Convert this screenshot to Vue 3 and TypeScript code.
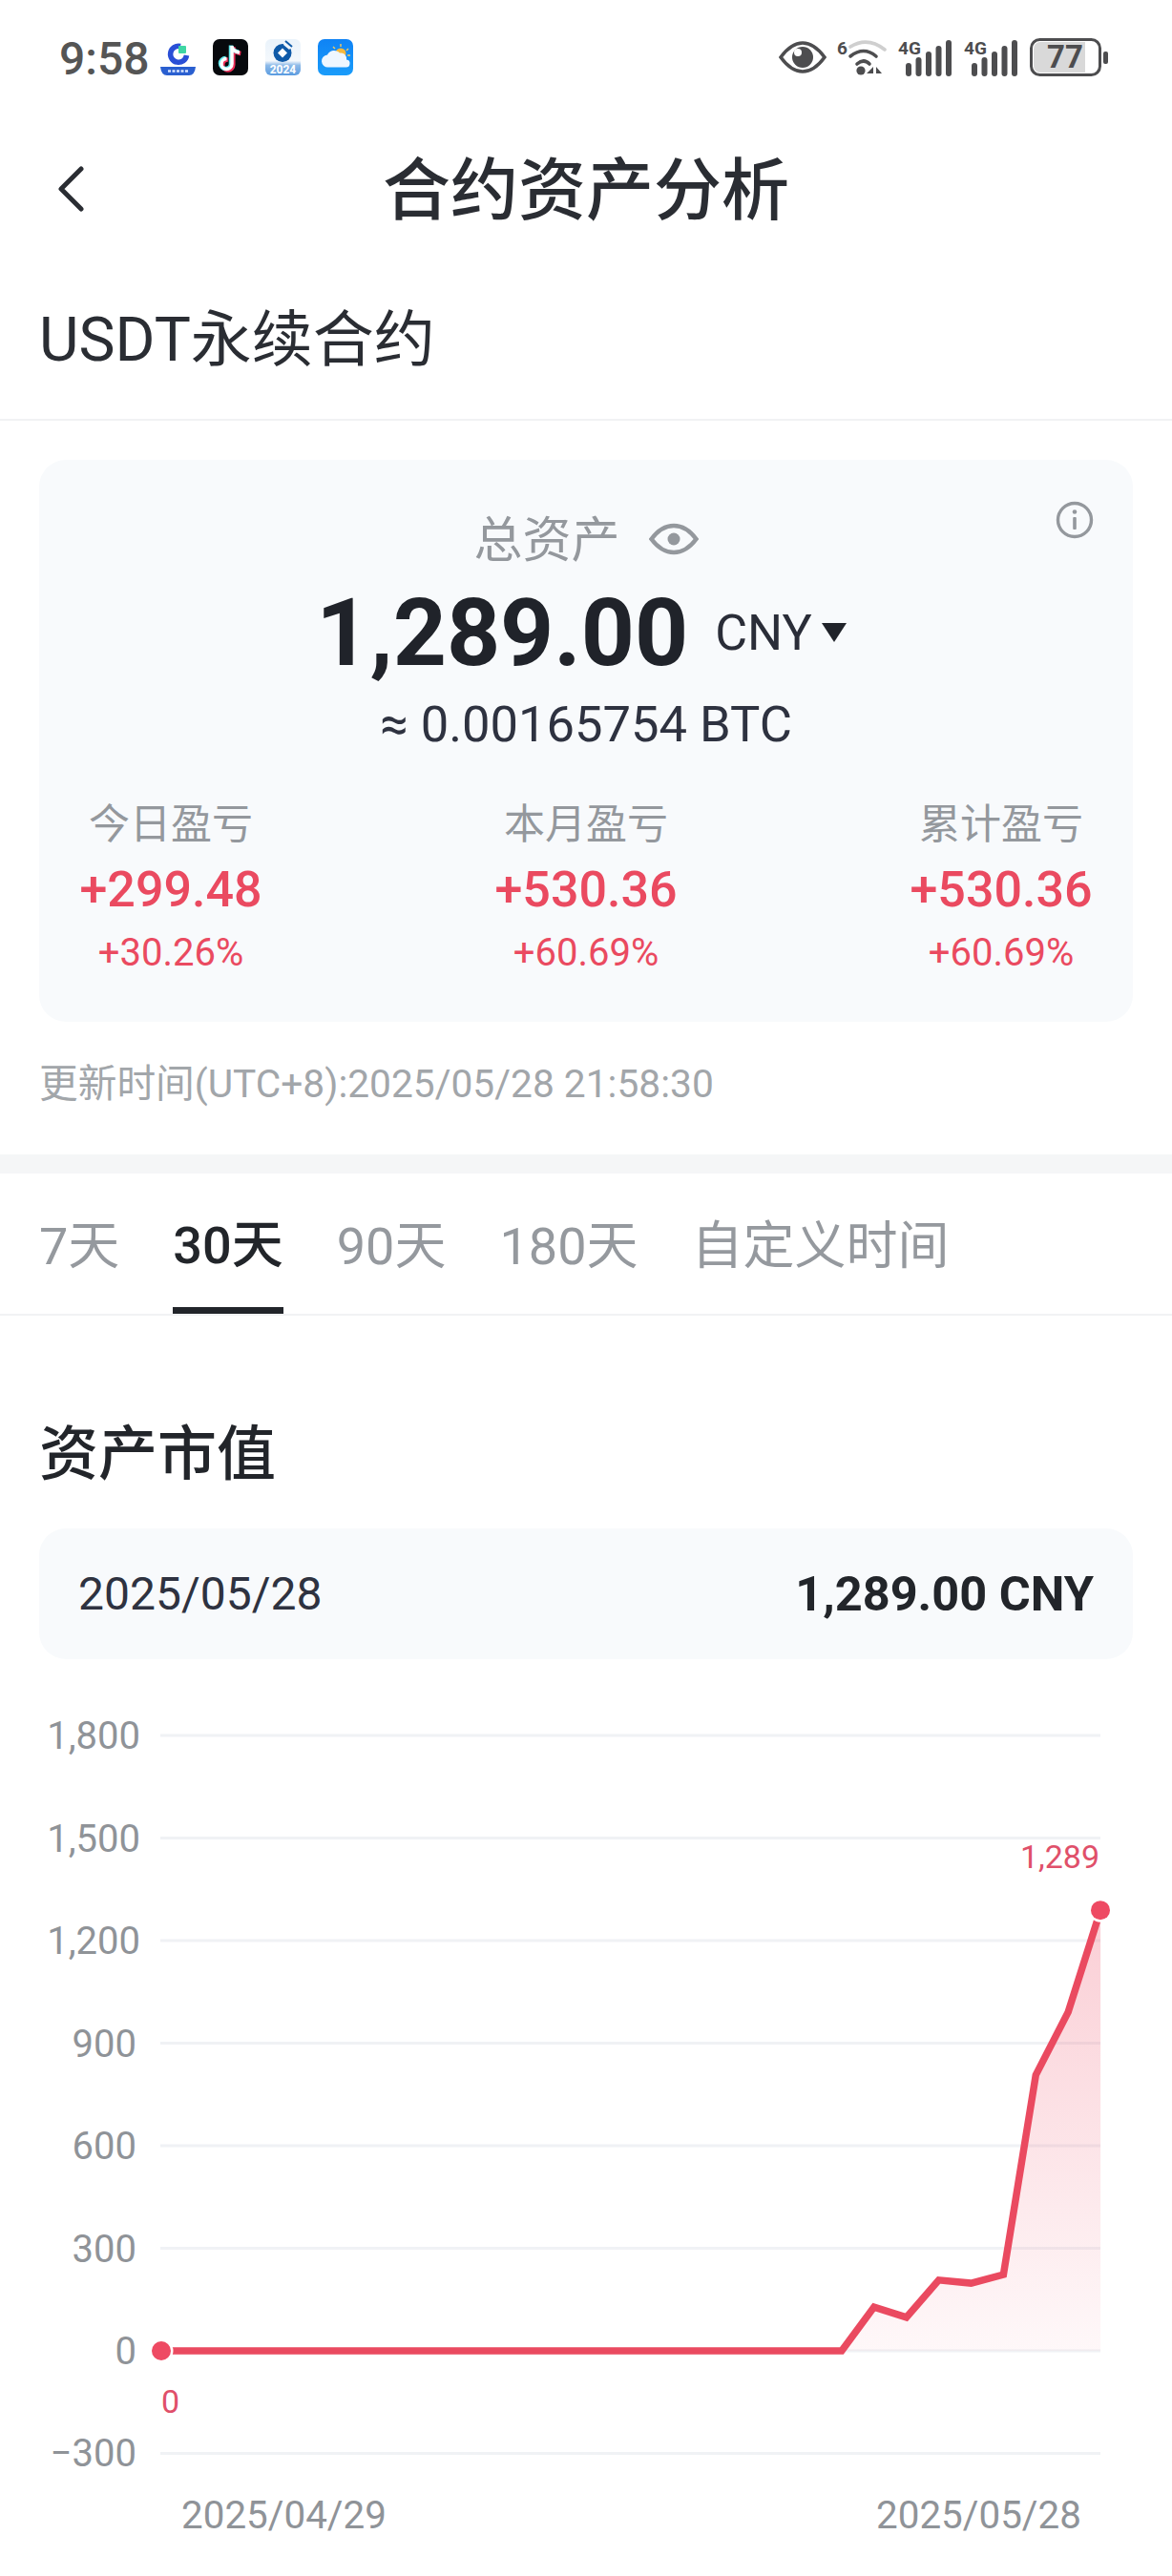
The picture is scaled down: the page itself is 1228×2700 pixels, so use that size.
<script setup lang="ts">
import { computed } from 'vue';

interface Stat {
  label: string;
  value: string;
  pct: string;
}

const stats: Stat[] = [
  { label: '今日盈亏', value: '+299.48', pct: '+30.26%' },
  { label: '本月盈亏', value: '+530.36', pct: '+60.69%' },
  { label: '累计盈亏', value: '+530.36', pct: '+60.69%' }
];

const tabs = ['7天', '30天', '90天', '180天', '自定义时间'];
const activeTab = '30天';

const ticks = [1800, 1500, 1200, 900, 600, 300, 0, -300];
const values = [
  ...Array.from({ length: 22 }, () => 0),
  128, 98, 207, 198, 223, 807, 991, 1289
];

const X0 = 170;
const XSTEP = 33.9;
const chartX = (i: number) => X0 + i * XSTEP;
const chartY = (v: number) => 704 - v * 0.3583;

const linePoints = computed(() =>
  values.map((v, i) => `${chartX(i).toFixed(1)},${chartY(v).toFixed(1)}`).join(' ')
);
const areaPoints = computed(() => {
  const last = values.length - 1;
  return `${X0},${chartY(0)} ${linePoints.value} ${chartX(last)},${chartY(0)}`;
});
const formatTick = (t: number) => (t < 0 ? '−' + Math.abs(t) : t.toLocaleString('en-US'));
// labels with a comma sit a few px further right in the original
const tickX = (t: number) => (t >= 1000 ? 147 : 143);
const bars = [14, 20, 26, 32, 38];
</script>

<template>
  <div class="page">
    <div class="status">
      <div class="status-left">
        <span class="time">9:58</span>
        <svg class="app" viewBox="0 0 37 38">
          <path d="M21 7.500a8.500 8.500 0 1 0 6.500 9.500" fill="none" stroke="#2a4fd6" stroke-width="5.500" />
          <rect x="19" y="7" width="8" height="8" rx="1" fill="#3fd6a4" />
          <path d="M0 29h37q-1 9-7 9H7q-6 0-7-9z" fill="#2a5fd0" />
          <path d="M8 33.500h21" stroke="#d5e3ff" stroke-width="2.400" stroke-dasharray="3 1.500" />
        </svg>
        <svg class="app" viewBox="0 0 37 38">
          <rect width="37" height="38" rx="7" fill="#07090d" />
          <path d="M20 7v19a5.500 5.500 0 1 1-5.500-5.500M20 8q1 5 8 6" fill="none" stroke="#f0305a" stroke-width="4.500" transform="translate(1.300 1)" />
          <path d="M20 7v19a5.500 5.500 0 1 1-5.500-5.500M20 8q1 5 8 6" fill="none" stroke="#5fe6ea" stroke-width="4.500" transform="translate(-1 -.6)" />
          <path d="M20 7v19a5.500 5.500 0 1 1-5.500-5.500M20 8q1 5 8 6" fill="none" stroke="#fff" stroke-width="3.400" />
        </svg>
        <svg class="app" viewBox="0 0 37 38">
          <defs>
            <linearGradient id="ccb" x1="0" y1="0" x2="0" y2="1">
              <stop offset="0" stop-color="#eaf3fb" />
              <stop offset="0.6" stop-color="#f4f8fc" />
              <stop offset="0.72" stop-color="#8fbbe8" />
              <stop offset="1" stop-color="#5a9be0" />
            </linearGradient>
          </defs>
          <rect width="37" height="38" rx="6" fill="url(#ccb)" />
          <circle cx="18" cy="14.500" r="9.500" fill="#0f5aa8" />
          <path d="M18 9.500l5 5-5 5-5-5z" fill="#fff" />
          <path d="M20 3l7 6-2 2-6-5z" fill="#f2f7fc" />
          <path d="M21 2l7 6" stroke="#0f5aa8" stroke-width="2" />
          <text x="18.500" y="36" class="year">2024</text>
        </svg>
        <svg class="app" viewBox="0 0 37 38">
          <defs>
            <linearGradient id="wx" x1="0" y1="0" x2="0" y2="1">
              <stop offset="0" stop-color="#0f83f5" />
              <stop offset="1" stop-color="#1a9cfa" />
            </linearGradient>
          </defs>
          <rect width="37" height="38" rx="7" fill="url(#wx)" />
          <circle cx="24" cy="15" r="5.500" fill="#f5b83d" />
          <path d="M24 5v3M32 10l-2 2M16 8l2 2M34 17h-3" stroke="#f5c860" stroke-width="1.400" />
          <path d="M11 29.500a6.500 6.500 0 0 1-1-13 8 8 0 0 1 13-2 6 6 0 0 1 7 7 4 4 0 0 1-1 8z" fill="#eef6ff" />
        </svg>
      </div>
      <div class="status-right">
        <svg class="s-eye" viewBox="0 0 50 34">
          <path d="M2 17Q13 2 25 2t23 15Q37 32 25 32T2 17z" fill="none" stroke="#4d4d4f" stroke-width="3.600" />
          <circle cx="25" cy="17" r="11" fill="#4d4d4f" />
          <circle cx="20" cy="12" r="4" fill="#fff" />
        </svg>
        <svg class="s-wifi" viewBox="0 0 54 40">
          <text x="0" y="17" class="tiny">6</text>
          <path d="M14 9Q32-2 50 12" fill="none" stroke="#cfcfcf" stroke-width="3.600" stroke-linecap="round" />
          <path d="M14 19Q28 8 41 19" fill="none" stroke="#4d4d4f" stroke-width="3.600" stroke-linecap="round" />
          <path d="M21 27q7-6 13 0" fill="none" stroke="#4d4d4f" stroke-width="3.600" stroke-linecap="round" />
          <circle cx="25" cy="34" r="4.600" fill="#4d4d4f" />
          <path d="M38 30v7h-7zM41 30l6 7h-6z" fill="#4d4d4f" />
        </svg>
        <svg v-for="n in 2" :key="n" class="s-sig" viewBox="0 0 56 40">
          <text x="0" y="17" class="tiny">4G</text>
          <rect
            v-for="(h, i) in bars"
            :key="i"
            :x="8 + i * 10.500"
            :y="40 - h"
            width="6"
            :height="h"
            rx="3"
            fill="#4d4d4f"
          />
        </svg>
        <svg class="s-bat" viewBox="0 0 82 40">
          <rect x="1.500" y="1.500" width="72" height="37" rx="9" fill="#fff" stroke="#4d4d4f" stroke-width="3" />
          <path d="M4 11a7 7 0 0 1 7-7h47v32H11a7 7 0 0 1-7-7z" fill="#d9d9d9" />
          <text x="37" y="31" class="batt">77</text>
          <rect x="77" y="14" width="5" height="13" rx="2" fill="#4d4d4f" />
        </svg>
      </div>
    </div>

    <header class="nav">
      <svg class="back" viewBox="0 0 30 48">
        <path d="M26 3 5 24l21 21" fill="none" stroke="#2a2d33" stroke-width="5" stroke-linecap="round" stroke-linejoin="round" />
      </svg>
      <h1 class="title">合约资产分析</h1>
      <span></span>
    </header>

    <div class="section-title">USDT永续合约</div>

    <section class="summary">
      <div class="card">
        <svg class="info" viewBox="0 0 40 40">
          <circle cx="20" cy="20" r="17.500" fill="none" stroke="#94989d" stroke-width="3.400" />
          <rect x="18.200" y="17" width="3.600" height="13" rx="1" fill="#94989d" />
          <circle cx="20" cy="11.500" r="2.300" fill="#94989d" />
        </svg>
        <div class="total-label">
          <span>总资产</span>
          <svg class="eye" viewBox="0 0 52 34">
            <path d="M2.500 17Q13 3 26 3T49.500 17Q39 31 26 31T2.500 17z" fill="none" stroke="#94989d" stroke-width="4.500" />
            <circle cx="26" cy="17" r="6.500" fill="#94989d" />
          </svg>
        </div>
        <div class="total">
          <span class="amount">1,289.00</span>
          <span class="unit">CNY</span>
          <span class="caret"></span>
        </div>
        <div class="btc">≈ 0.00165754 BTC</div>
        <div class="stats">
          <div v-for="s in stats" :key="s.label" class="stat">
            <div class="stat-label">{{ s.label }}</div>
            <div class="stat-value">{{ s.value }}</div>
            <div class="stat-pct">{{ s.pct }}</div>
          </div>
        </div>
      </div>
      <div class="updated">更新时间(UTC+8):2025/05/28 21:58:30</div>
    </section>

    <nav class="tabs">
      <div v-for="t in tabs" :key="t" class="tab" :class="{ active: t === activeTab }">{{ t }}</div>
    </nav>

    <section class="market">
      <h2 class="market-title">资产市值</h2>
      <div class="pill">
        <span class="pill-date">2025/05/28</span>
        <span class="pill-value">1,289.00 CNY</span>
      </div>
    </section>

    <svg class="chart" viewBox="0 0 1228 940">
      <defs>
        <linearGradient id="area" x1="0" y1="0" x2="0" y2="1">
          <stop offset="0" stop-color="#ee4a63" stop-opacity="0.27" />
          <stop offset="1" stop-color="#ee4a63" stop-opacity="0.04" />
        </linearGradient>
      </defs>
      <g v-for="t in ticks" :key="t">
        <line x1="168" x2="1153" :y1="chartY(t)" :y2="chartY(t)" stroke="#f0f2f5" stroke-width="3" />
        <text :x="tickX(t)" :y="chartY(t) + 14" class="tick">{{ formatTick(t) }}</text>
      </g>
      <polygon :points="areaPoints" fill="url(#area)" />
      <polyline :points="linePoints" fill="none" stroke="#ea4a60" stroke-width="7.500" stroke-linejoin="miter" />
      <circle cx="169" :cy="chartY(0)" r="10" class="dot" />
      <circle cx="1153" :cy="chartY(1289)" r="10" class="dot" />
      <text x="1152" y="198" class="peak">1,289</text>
      <text x="169" y="769" class="low">0</text>
      <text x="190" y="890" class="xlabel">2025/04/29</text>
      <text x="918" y="890" class="xlabel">2025/05/28</text>
    </svg>
  </div>
</template>

<style scoped>
.page {
  width: 1228px;
  height: 2700px;
  overflow: hidden;
  background: #fff;
  font-family: Roboto, "Noto Sans CJK SC", sans-serif;
  color: #24272c;
}

.status {
  height: 120px;
  padding: 0 67px 0 62px;
  display: flex;
  align-items: center;
  justify-content: space-between;
}

.status-left {
  display: flex;
  align-items: center;
  gap: 18px;
}

.time {
  font-size: 48px;
  font-weight: 500;
  color: #555;
  margin-right: -7px;
  transform: translateY(1px);
}

.app {
  width: 37px;
  height: 38px;
}

.status-right {
  display: flex;
  align-items: center;
  gap: 10px;
}

.s-eye {
  width: 50px;
  height: 34px;
}

.s-wifi {
  width: 54px;
  height: 40px;
  margin-left: 1px;
}

.s-sig {
  width: 56px;
  height: 40px;
}

.s-sig + .s-sig {
  margin-left: 3px;
}

.s-bat {
  width: 82px;
  height: 40px;
  margin-left: 3px;
}

.tiny {
  font: 700 19px Roboto, sans-serif;
  fill: #4d4d4f;
}

.batt {
  font: 700 33px Roboto, sans-serif;
  fill: #4d4d4f;
  text-anchor: middle;
}

.year {
  font: 700 12px Roboto, sans-serif;
  fill: #fff;
  text-anchor: middle;
}

.nav {
  height: 150px;
  padding: 0 59px;
  display: grid;
  grid-template-columns: 1fr auto 1fr;
  align-items: center;
}

.back {
  width: 30px;
  height: 48px;
  margin-top: 6px;
}

.title {
  margin: 0 0 5px;
  font-size: 71px;
  font-weight: 500;
  color: #2a2d33;
}

.section-title {
  height: 171px;
  padding: 0 41px 10px;
  box-sizing: border-box;
  display: flex;
  align-items: center;
  font-size: 64px;
  color: #2a2d33;
  border-bottom: 2px solid #f1f2f4;
}

.summary {
  padding: 41px 41px 0;
  height: 789px;
  box-sizing: border-box;
  border-bottom: 20px solid #f5f6f7;
}

.card {
  position: relative;
  height: 589px;
  box-sizing: border-box;
  padding: 47px 42px 0;
  background: #f8fafc;
  border-radius: 28px;
  display: flex;
  flex-direction: column;
  align-items: center;
}

.info {
  position: absolute;
  top: 43px;
  right: 41px;
  width: 40px;
  height: 40px;
}

.total-label {
  display: flex;
  align-items: center;
  gap: 30px;
  height: 66px;
  font-size: 51px;
  color: #94989d;
}

.eye {
  width: 52px;
  height: 34px;
  margin-top: 5px;
}

.total {
  display: flex;
  align-items: center;
  height: 120px;
  margin: 8px 0 0 -10px;
}

.amount {
  font-size: 98px;
  font-weight: 700;
  color: #20232a;
}

.unit {
  margin-left: 28px;
  font-size: 52px;
  color: #2a2d38;
}

.caret {
  margin-left: 10px;
  border-left: 13px solid transparent;
  border-right: 13px solid transparent;
  border-top: 20px solid #20232a;
}

.btc {
  margin-top: 1px;
  font-size: 52.500px;
  line-height: 70px;
  color: #2e3240;
}

.stats {
  width: 100%;
  margin-top: 40px;
  display: flex;
  justify-content: space-between;
}

.stat {
  width: 192px;
  display: flex;
  flex-direction: column;
  align-items: center;
  white-space: nowrap;
}

.stat-label {
  font-size: 43px;
  line-height: 60px;
  color: #94989d;
}

.stat-value {
  margin-top: 4px;
  font-size: 52px;
  line-height: 70px;
  font-weight: 500;
  color: #ea4a60;
}

.stat-pct {
  margin-top: 3px;
  font-size: 40px;
  line-height: 56px;
  color: #ea4a60;
}

.updated {
  margin-top: 40px;
  font-size: 40.700px;
  line-height: 50px;
  color: #a2a6aa;
  white-space: nowrap;
}

.tabs {
  height: 149px;
  box-sizing: border-box;
  padding: 0 41px;
  display: flex;
  gap: 56px;
  border-bottom: 2px solid #f1f2f4;
}

.tab {
  display: flex;
  align-items: center;
  height: 149px;
  padding-bottom: 6px;
  box-sizing: border-box;
  font-size: 54px;
  color: #95999e;
  white-space: nowrap;
}

.tab.active {
  color: #22252a;
  font-weight: 500;
  box-shadow: inset 0 -7px 0 #22252a;
  height: 147px;
}

.market {
  padding: 0 41px;
}

.market-title {
  margin: 0;
  height: 223px;
  box-sizing: border-box;
  padding-top: 56px;
  display: flex;
  align-items: center;
  font-size: 62px;
  font-weight: 500;
  color: #22252a;
}

.pill {
  height: 137px;
  padding: 0 41px;
  display: flex;
  align-items: center;
  justify-content: space-between;
  background: #f8fafc;
  border-radius: 28px;
}

.pill-date {
  font-size: 48px;
  color: #2e3240;
}

.pill-value {
  font-size: 50.500px;
  font-weight: 700;
  color: #22252a;
}

.chart {
  display: block;
  width: 1228px;
  height: 940px;
  margin-top: 21px;
}

.tick {
  font: 400 40px Roboto, sans-serif;
  fill: #8f9398;
  text-anchor: end;
}

.xlabel {
  font: 400 40.400px Roboto, sans-serif;
  fill: #8f9398;
}

.peak {
  font: 400 34px Roboto, sans-serif;
  fill: #e0506a;
  text-anchor: end;
}

.low {
  font: 400 34px Roboto, sans-serif;
  fill: #e0506a;
}

.dot {
  fill: #ee4a63;
  stroke: #fff;
  stroke-width: 5;
  paint-order: stroke;
}
</style>
